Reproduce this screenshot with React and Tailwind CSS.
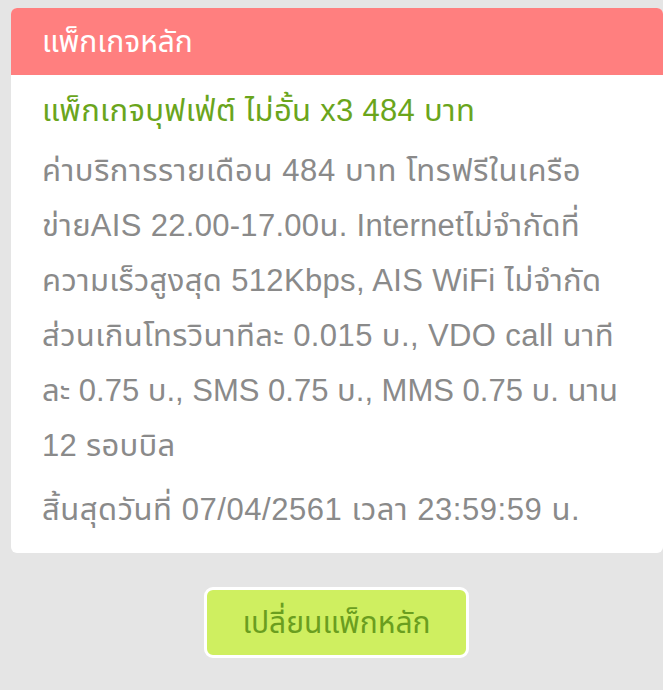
export default function App() {
  const font = { fontFamily: '"Liberation Sans", "Noto Sans Thai", "Noto Sans", sans-serif' };
  const lines = [
    { t: "ค่าบริการรายเดือน 484 บาท โทรฟรีในเครือ", c: "tracking-[0.6px]" },
    { t: "ข่ายAIS 22.00-17.00น. Internetไม่จำกัดที่", c: "tracking-[0.3px]" },
    { t: "ความเร็วสูงสุด 512Kbps, AIS WiFi ไม่จำกัด", c: "tracking-[0.35px]" },
    { t: "ส่วนเกินโทรวินาทีละ 0.015 บ., VDO call นาที", c: "tracking-[0.4px]" },
    { t: "ละ 0.75 บ., SMS 0.75 บ., MMS 0.75 บ. นาน", c: "tracking-[0px]" },
    { t: "12 รอบบิล", c: "tracking-[0.3px]" },
  ];
  return (
    <div className="min-h-[690px] w-[663px] bg-[#e5e5e5] pt-[8px] overflow-hidden" style={font}>
      <div className="ml-[11px] w-[652px] rounded-[6px] bg-white overflow-hidden">
        <div className="h-[67px] bg-[#ff7f7f] pl-[31px] flex items-center text-white text-[30px]">
          แพ็กเกจหลัก
        </div>
        <div className="pl-[31px] pt-[16px] pb-[18px]">
          <div className="text-[#6aa51c] text-[31px] leading-[40px] tracking-[0.3px]">
            แพ็กเกจบุฟเฟ่ต์ ไม่อั้น x3 484 บาท
          </div>
          <div className="mt-[12px] text-[#8a8a8a] text-[31px] leading-[55px] whitespace-nowrap">
            {lines.map((l, i) => (
              <div key={i} className={l.c}>{l.t}</div>
            ))}
          </div>
          <div className="mt-[12px] text-[#8a8a8a] text-[31px] leading-[50px] tracking-[0.55px] whitespace-nowrap">
            สิ้นสุดวันที่ 07/04/2561 เวลา 23:59:59 น.
          </div>
        </div>
      </div>
      <div className="flex justify-center pt-[34px] pl-[10px]">
        <button className="w-[265px] h-[71px] rounded-[9px] border-[3px] border-white bg-[#cfef60] text-[#6a9e1f] text-[30px]" style={font}>
          เปลี่ยนแพ็กหลัก
        </button>
      </div>
    </div>
  );
}
